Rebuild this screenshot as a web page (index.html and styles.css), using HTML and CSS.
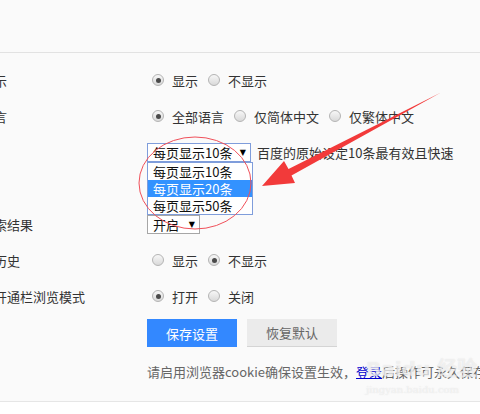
FILE: index.html
```html
<!DOCTYPE html>
<html lang="zh-CN">
<head>
    <meta charset="UTF-8">
    <title>搜索设置</title>
    <link rel="stylesheet" href="styles.css">
</head>
<body>
    <div class="page">
        <div class="topbar"></div>

        <div class="settings">
            <div class="row">
                <div class="label">搜索框提示</div>
                <div class="control">
                    <span class="radio-item"><span class="radio checked"></span>显示</span>
                    <span class="radio-item"><span class="radio"></span>不显示</span>
                </div>
            </div>

            <div class="row">
                <div class="label">结果的语言</div>
                <div class="control">
                    <span class="radio-item"><span class="radio checked"></span>全部语言</span>
                    <span class="radio-item"><span class="radio"></span>仅简体中文</span>
                    <span class="radio-item"><span class="radio"></span>仅繁体中文</span>
                </div>
            </div>

            <div class="row row-tall">
                <div class="label">每页条数</div>
                <div class="control">
                    <div class="select-wrap">
                        <div class="select focused">每页显示10条<span class="caret">▼</span></div>
                        <ul class="dropdown">
                            <li>每页显示10条</li>
                            <li class="active">每页显示20条</li>
                            <li>每页显示50条</li>
                        </ul>
                    </div>
                    <span class="note">百度的原始设定10条最有效且快速</span>
                </div>
            </div>

            <div class="row">
                <div class="label">预加载搜索结果</div>
                <div class="control">
                    <div class="select small">开启<span class="caret">▼</span></div>
                </div>
            </div>

            <div class="row">
                <div class="label">保存搜索历史</div>
                <div class="control">
                    <span class="radio-item"><span class="radio"></span>显示</span>
                    <span class="radio-item"><span class="radio checked"></span>不显示</span>
                </div>
            </div>

            <div class="row">
                <div class="label">是否要打开通栏浏览模式</div>
                <div class="control">
                    <span class="radio-item"><span class="radio checked"></span>打开</span>
                    <span class="radio-item"><span class="radio"></span>关闭</span>
                </div>
            </div>

            <div class="actions">
                <button class="btn btn-primary">保存设置</button>
                <button class="btn btn-default">恢复默认</button>
            </div>

            <p class="tip">请启用浏览器cookie确保设置生效，<a href="#">登录</a>后操作可永久保存您的设置。</p>
        </div>

        <div class="watermark">
            <div class="wm-logo">Bai<span class="wm-paw">du</span> 经验</div>
            <div class="wm-url">jingyan.baidu.com</div>
        </div>

        <!-- annotation drawn on top of the screenshot -->
        <svg class="annotation" width="480" height="414" viewBox="0 0 480 414">
            <ellipse cx="195" cy="183" rx="56" ry="46" fill="none" stroke="#f0505a" stroke-width="1"></ellipse>
            <polygon fill="#f23a3a" points="262,186 284,161 288.5,169 441,92.5 291.5,175.5 295,183"></polygon>
        </svg>
    </div>
</body>
</html>
```

FILE: styles.css
```css
* {
    margin: 0;
    padding: 0;
    box-sizing: border-box;
}

body {
    font-family: "Noto Sans CJK SC", "Noto Sans", sans-serif;
    font-size: 13px;
    color: #333;
    background: #fff;
    overflow: hidden;
}

.page {
    position: relative;
    width: 480px;
    height: 402px;
    background: #fafafa;
    border-bottom: 1px solid #e6e6e6;
    overflow: hidden;
}

.topbar {
    height: 53px;
    border-bottom: 1px solid #e2e2e2;
}

.settings {
    padding-top: 9px;
    margin-left: -58px;
}

.row {
    display: flex;
    align-items: center;
    height: 36px;
}

.row-tall {
    height: 72px;
    align-items: flex-start;
    padding-top: 9px;
}

.label {
    width: 205px;
    flex-shrink: 0;
    white-space: nowrap;
    line-height: 19px;
}

.control {
    display: flex;
    align-items: center;
    white-space: nowrap;
}

.radio-item {
    display: flex;
    align-items: center;
    margin-right: 10px;
    line-height: 19px;
}

.radio-item:first-child {
    margin-left: 5px;
}

.radio {
    width: 12px;
    height: 12px;
    margin-right: 8px;
    border-radius: 50%;
    border: 1px solid #b4b4b4;
    background: linear-gradient(#f7f7f7, #d9d9d9);
    position: relative;
}

.radio.checked::after {
    content: "";
    position: absolute;
    left: 2.5px;
    top: 2.5px;
    width: 5px;
    height: 5px;
    border-radius: 50%;
    background: #4a4a4a;
}

.select-wrap {
    position: relative;
}

.select {
    display: flex;
    align-items: center;
    justify-content: space-between;
    width: 104px;
    height: 19px;
    padding: 0 4px 0 5px;
    background: #fff;
    border: 1px solid #a6a6a6;
    line-height: 17px;
    color: #111;
}

.select.focused {
    border-color: #7f9ddb;
}

.select.small {
    width: 53px;
    height: 19px;
    padding-left: 5px;
}

.caret {
    font-family: "DejaVu Sans", sans-serif;
    font-size: 8px;
    color: #000;
}

.dropdown {
    position: absolute;
    left: 0;
    top: 19px;
    width: 106px;
    list-style: none;
    background: #fff;
    border: 1px solid #7f9ddb;
    z-index: 2;
}

.dropdown li {
    height: 17px;
    line-height: 17px;
    padding-left: 5px;
    color: #111;
}

.dropdown li.active {
    background: #3392ff;
    color: #fff;
}

.note {
    margin-left: 6px;
    line-height: 19px;
}

.actions {
    display: flex;
    gap: 10px;
    margin-top: 5px;
    margin-left: 205px;
}

.btn {
    width: 90px;
    height: 28px;
    border: none;
    font-family: inherit;
    font-size: 13px;
}

.btn-primary {
    background: #3388ff;
    color: #fff;
}

.btn-default {
    background: #ebebeb;
    color: #666;
    border-bottom: 1px solid #d4d4d4;
}

.tip {
    margin-top: 16px;
    margin-left: 205px;
    white-space: nowrap;
    color: #666;
    line-height: 18px;
}

.tip a {
    color: #0000cc;
}

.watermark {
    position: absolute;
    left: 366px;
    top: 358px;
    color: rgba(255, 255, 255, 0.55);
    text-shadow: 0 0 1px rgba(200, 200, 200, 0.6);
    font-family: "DejaVu Sans", sans-serif;
    z-index: 1;
}

.wm-logo {
    font-size: 20px;
    font-weight: bold;
    line-height: 22px;
}

.wm-url {
    font-size: 10px;
    font-family: "DejaVu Serif", serif;
    margin-top: 4px;
}

.annotation {
    position: absolute;
    left: 0;
    top: 0;
    z-index: 3;
}
```
